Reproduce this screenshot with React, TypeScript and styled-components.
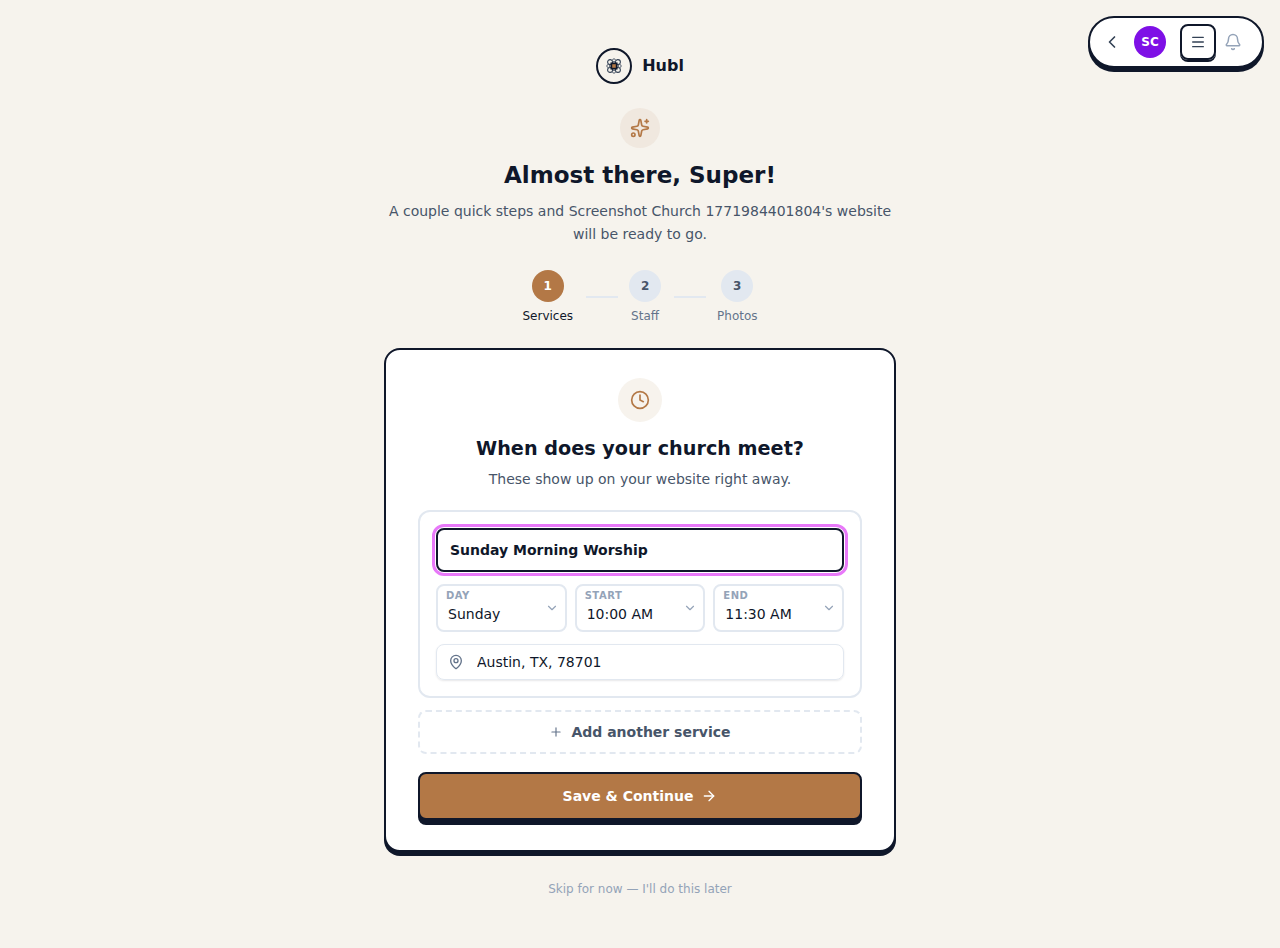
import * as React from 'react';
import styled, { createGlobalStyle } from 'styled-components';
import { ArrowRight, Bell, ChevronDown, ChevronLeft, Clock, MapPin, Menu, Plus, Sparkles } from 'lucide-react';

const GlobalStyle = createGlobalStyle`
    html, body {
        margin: 0;
        background-color: #f6f3ed;
        font-family: "DejaVu Sans", sans-serif;
        color: #0f172a;
    }
    * { box-sizing: border-box; }
`;

const Page = styled.div`
    position: relative;
    min-height: 948px;
    display: flex;
    flex-direction: column;
    align-items: center;
    padding-top: 48px;
`;

const TopBar = styled.div`
    position: absolute;
    top: 16px;
    right: 16px;
    width: 176px;
    height: 52px;
    display: flex;
    align-items: center;
    padding: 0 12px;
    background-color: #ffffff;
    border: 2px solid #0f172a;
    border-radius: 26px;
    box-shadow: 0 4px 0 #0f172a;
`;

const BackButton = styled.span`
    width: 20px;
    display: flex;
    justify-content: center;
    color: #334155;
`;

const Avatar = styled.span`
    width: 32px;
    height: 32px;
    margin-left: 12px;
    border-radius: 50%;
    background-color: #7e10e6;
    color: #ffffff;
    font-size: 12px;
    font-weight: 700;
    display: flex;
    align-items: center;
    justify-content: center;
`;

const MenuButton = styled.span`
    width: 36px;
    height: 36px;
    margin-left: 14px;
    border: 2px solid #0f172a;
    border-radius: 8px;
    box-shadow: 0 2px 0 #0f172a;
    display: flex;
    align-items: center;
    justify-content: center;
    color: #334155;
`;

const BellButton = styled.span`
    margin-left: 8px;
    display: flex;
    color: #94a3b8;
`;

const Brand = styled.div`
    display: flex;
    align-items: center;
    gap: 10px;
`;

const BrandMark = styled.span`
    width: 36px;
    height: 36px;
    border: 2px solid #0f172a;
    border-radius: 50%;
    display: flex;
    align-items: center;
    justify-content: center;
`;

const BrandName = styled.span`
    font-size: 16px;
    font-weight: 700;
    padding-bottom: 2px;
`;

const IconBadge = styled.div<{ $size: number; $bg: string }>`
    width: ${(p) => p.$size}px;
    height: ${(p) => p.$size}px;
    border-radius: 50%;
    background-color: ${(p) => p.$bg};
    color: #b37846;
    display: flex;
    align-items: center;
    justify-content: center;
`;

const HeroBadge = styled(IconBadge)`
    margin-top: 24px;
`;

const Title = styled.h1`
    margin: 12px 0 0;
    font-size: 23.04px;
    line-height: 30px;
    font-weight: 700;
`;

const Subtitle = styled.p`
    margin: 10px 0 0;
    width: 512px;
    text-align: center;
    font-size: 14px;
    line-height: 23px;
    color: #475569;
`;

const Steps = styled.div`
    margin-top: 24px;
    display: flex;
    align-items: flex-start;
    gap: 12px;
`;

const Step = styled.div`
    display: flex;
    flex-direction: column;
    align-items: center;
    gap: 5px;
`;

const StepDot = styled.span<{ $active?: boolean }>`
    width: 32px;
    height: 32px;
    border-radius: 50%;
    background-color: ${(p) => (p.$active ? '#b37846' : '#e2e8f0')};
    color: ${(p) => (p.$active ? '#ffffff' : '#475569')};
    font-size: 12px;
    font-weight: 700;
    display: flex;
    align-items: center;
    justify-content: center;
`;

const StepLabel = styled.span<{ $active?: boolean }>`
    font-size: 12px;
    line-height: 18px;
    color: ${(p) => (p.$active ? '#0f172a' : '#64748b')};
`;

const StepLine = styled.span`
    width: 32px;
    height: 2px;
    margin: 26px -0.5px 0 0.5px;
    background-color: #e2e8f0;
`;

const Card = styled.div`
    margin-top: 23px;
    width: 512px;
    height: 504px;
    padding: 28px 32px 0;
    background-color: #ffffff;
    border: 2px solid #0f172a;
    border-radius: 16px;
    box-shadow: 0 4px 0 #0f172a;
    display: flex;
    flex-direction: column;
    align-items: center;
`;

const CardTitle = styled.h2`
    margin: 13px 0 0;
    font-size: 19.2px;
    line-height: 28px;
    font-weight: 700;
`;

const CardText = styled.p`
    margin: 6px 0 0;
    font-size: 14px;
    line-height: 20px;
    color: #475569;
`;

const ServicePanel = styled.div`
    margin-top: 21px;
    width: 444px;
    padding: 16px;
    border: 2px solid #e2e8f0;
    border-radius: 12px;
    display: flex;
    flex-direction: column;
    gap: 12px;
`;

const NameInput = styled.input`
    width: 100%;
    height: 44px;
    padding: 0 12px;
    border: 2px solid #0f172a;
    border-radius: 8px;
    outline: 3px solid #e879f9;
    outline-offset: 1px;
    background-color: #ffffff;
    color: #0f172a;
    font-family: inherit;
    font-size: 14px;
    font-weight: 700;
`;

const SelectRow = styled.div`
    display: grid;
    grid-template-columns: repeat(3, 1fr);
    gap: 8px;
`;

const SelectBox = styled.label`
    position: relative;
    height: 48px;
    padding: 4px 8px 0;
    border: 2px solid #e2e8f0;
    border-radius: 8px;
    display: flex;
    flex-direction: column;
`;

const SelectCaption = styled.span`
    font-size: 10px;
    line-height: 12px;
    font-weight: 700;
    letter-spacing: 0.5px;
    color: #94a3b8;
`;

const SelectValue = styled.select`
    appearance: none;
    border: 0;
    padding: 0 0 0 2px;
    margin-top: 2px;
    background: transparent;
    color: #0f172a;
    font-family: inherit;
    font-size: 14px;
    line-height: 20px;
    outline: none;
`;

const SelectChevron = styled(ChevronDown)`
    position: absolute;
    top: 15px;
    right: 6px;
    color: #94a3b8;
`;

const LocationBox = styled.div`
    height: 36px;
    padding: 0 12px 0 11px;
    border: 1px solid #e2e8f0;
    border-radius: 8px;
    box-shadow: 0 1px 2px rgba(15, 23, 42, 0.1);
    display: flex;
    align-items: center;
    gap: 13px;
    color: #64748b;
`;

const LocationInput = styled.input`
    flex: 1;
    border: 0;
    padding: 0;
    background: transparent;
    color: #0f172a;
    font-family: inherit;
    font-size: 14px;
    outline: none;
`;

const AddButton = styled.button`
    margin-top: 12px;
    width: 444px;
    height: 44px;
    border: 2px dashed #e2e8f0;
    border-radius: 8px;
    background: transparent;
    color: #475569;
    font-family: inherit;
    font-size: 14px;
    font-weight: 700;
    display: flex;
    align-items: center;
    justify-content: center;
    gap: 8px;
    svg { color: #64748b; }
`;

const SaveButton = styled.button`
    margin-top: 18px;
    width: 444px;
    height: 48px;
    border: 2px solid #0f172a;
    border-radius: 8px;
    box-shadow: 0 5px 0 #0f172a;
    background-color: #b37846;
    color: #ffffff;
    font-family: inherit;
    font-size: 14px;
    font-weight: 700;
    display: flex;
    align-items: center;
    justify-content: center;
    gap: 8px;
`;

const SkipLink = styled.a`
    margin-top: 29px;
    font-size: 12px;
    line-height: 16px;
    color: #94a3b8;
`;

const HubLogo = () => (
    <svg width="16" height="16" viewBox="0 0 18 18" fill="none">
        <circle cx="4.6" cy="4.6" r="2.8" fill="#f6f3ed" stroke="#334155" strokeWidth="1.2" />
        <circle cx="13.4" cy="4.6" r="2.8" fill="#f6f3ed" stroke="#334155" strokeWidth="1.2" />
        <circle cx="4.6" cy="13.4" r="2.8" fill="#f6f3ed" stroke="#334155" strokeWidth="1.2" />
        <circle cx="13.4" cy="13.4" r="2.8" fill="#f6f3ed" stroke="#334155" strokeWidth="1.2" />
        <circle cx="9" cy="2.6" r="1.7" fill="#f6f3ed" stroke="#334155" strokeWidth="0.9" />
        <circle cx="9" cy="15.4" r="1.7" fill="#f6f3ed" stroke="#334155" strokeWidth="0.9" />
        <circle cx="2.6" cy="9" r="1.7" fill="#f6f3ed" stroke="#334155" strokeWidth="0.9" />
        <circle cx="15.4" cy="9" r="1.7" fill="#f6f3ed" stroke="#334155" strokeWidth="0.9" />
        <rect x="5" y="5" width="8" height="8" fill="#0f172a" />
        <rect x="7" y="7" width="4" height="4" fill="#b37846" />
    </svg>
);

const selects = [
    { caption: 'DAY', value: 'Sunday' },
    { caption: 'START', value: '10:00 AM' },
    { caption: 'END', value: '11:30 AM' },
];

const App: React.FC = (): JSX.Element => {
    return (
        <Page>
            <GlobalStyle />
            <TopBar>
                <BackButton><ChevronLeft size={20} /></BackButton>
                <Avatar>SC</Avatar>
                <MenuButton><Menu size={16} /></MenuButton>
                <BellButton><Bell size={18} /></BellButton>
            </TopBar>

            <Brand>
                <BrandMark><HubLogo /></BrandMark>
                <BrandName>Hubl</BrandName>
            </Brand>
            <HeroBadge $size={40} $bg="#f0e8df"><Sparkles size={20} /></HeroBadge>
            <Title>Almost there, Super!</Title>
            <Subtitle>A couple quick steps and Screenshot Church 1771984401804's website will be ready to go.</Subtitle>

            <Steps>
                <Step><StepDot $active>1</StepDot><StepLabel $active>Services</StepLabel></Step>
                <StepLine />
                <Step><StepDot>2</StepDot><StepLabel>Staff</StepLabel></Step>
                <StepLine />
                <Step><StepDot>3</StepDot><StepLabel>Photos</StepLabel></Step>
            </Steps>

            <Card>
                <IconBadge $size={44} $bg="#f7f3ed"><Clock size={20} /></IconBadge>
                <CardTitle>When does your church meet?</CardTitle>
                <CardText>These show up on your website right away.</CardText>
                <ServicePanel>
                    <NameInput readOnly value="Sunday Morning Worship" />
                    <SelectRow>
                        {selects.map((s) => (
                            <SelectBox key={s.caption}>
                                <SelectCaption>{s.caption}</SelectCaption>
                                <SelectValue value={s.value} onChange={() => undefined}>
                                    <option>{s.value}</option>
                                </SelectValue>
                                <SelectChevron size={14} />
                            </SelectBox>
                        ))}
                    </SelectRow>
                    <LocationBox>
                        <MapPin size={16} />
                        <LocationInput readOnly value="Austin, TX, 78701" />
                    </LocationBox>
                </ServicePanel>
                <AddButton><Plus size={14} />Add another service</AddButton>
                <SaveButton>Save &amp; Continue<ArrowRight size={16} /></SaveButton>
            </Card>

            <SkipLink>Skip for now — I'll do this later</SkipLink>
        </Page>
    );
};

export default App;
